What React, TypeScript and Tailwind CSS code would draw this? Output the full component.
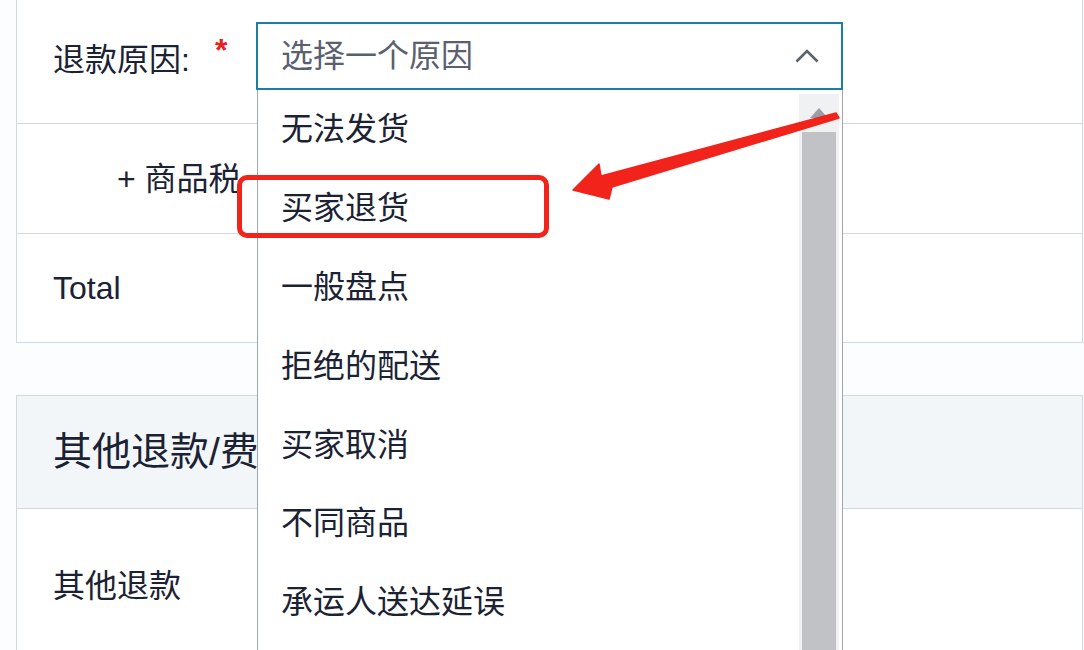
const reasons = [
  "无法发货",
  "买家退货",
  "一般盘点",
  "拒绝的配送",
  "买家取消",
  "不同商品",
  "承运人送达延误",
];

export default function App() {
  return (
    <div className="relative h-[650px] w-[1084px] overflow-hidden bg-[#fcfdfe] font-['Liberation_Sans','Noto_Sans_CJK_SC',sans-serif] text-[#1a2234]">
      <div className="ml-4 mr-px">
        {/* first card */}
        <div className="-mt-px border border-[#d3d9e1] bg-white">
          <div className="flex h-[124px] border-b border-[#d3d9e1] pl-[36px] pt-[22px]">
            <div className="flex w-[203px] items-start">
              <span className="mt-[19px] text-[32px] leading-[38px]">退款原因:</span>
              <span className="ml-[25px] mt-[12px] text-[32px] font-bold leading-none text-[#e8211d]">*</span>
            </div>
            <div className="flex h-[68px] w-[587px] items-center justify-between border-2 border-[#1b7ea3] bg-white pl-[23px] pr-[22px]">
              <span className="text-[32px] leading-[38px] text-[#596070]">选择一个原因</span>
              <svg width="24" height="14" viewBox="0 0 24 14" fill="none">
                <polyline points="1.5,12.5 12,2 22.5,12.5" stroke="#5a6272" strokeWidth="2.6" />
              </svg>
            </div>
          </div>
          <div className="flex h-[110px] items-center border-b border-[#d3d9e1] pl-[100px]">
            {/* clipped where the open list covers it */}
            <span className="w-[140px] overflow-hidden whitespace-nowrap text-[32px] leading-[38px]">+ 商品税</span>
          </div>
          <div className="flex h-[108px] items-center pl-[36px]">
            <span className="text-[32px] leading-[38px]">Total</span>
          </div>
        </div>

        {/* second card */}
        <div className="mt-[52px] border border-[#d3d9e1] bg-white">
          <div className="flex h-[113px] items-center border-b border-[#d3d9e1] bg-[#f3f6f9] pl-[36px]">
            <span className="w-[204px] overflow-hidden whitespace-nowrap text-[39px] leading-[46px]">其他退款/费用</span>
          </div>
          <div className="h-[200px] pl-[36px] pt-[58px]">
            <span className="text-[32px] leading-[38px]">其他退款</span>
          </div>
        </div>
      </div>

      {/* open dropdown list */}
      <div className="absolute left-[257px] top-[90px] z-10 flex h-[570px] w-[586px] border-x border-[#9ea6b2] bg-white">
        <ul className="flex-1">
          {reasons.map((r) => (
            <li key={r} className="flex h-[78.8px] items-center pl-[23px] text-[32px] leading-[38px]">
              {r}
            </li>
          ))}
        </ul>
        <div className="mr-[3px] mt-[4px] flex w-[40px] flex-col bg-[#f0f1f2]">
          <div className="flex h-[38px] items-center justify-center">
            <svg width="20" height="12" viewBox="0 0 20 12">
              <polygon points="10,1 19,11 1,11" fill="#9a9ea6" />
            </svg>
          </div>
          <div className="mx-[3px] flex-1 bg-[#c1c2c5]" />
        </div>
      </div>

      {/* annotation: red box */}
      <div className="pointer-events-none absolute left-[237px] top-[175px] z-20 h-[63px] w-[312px] rounded-[10px] border-[5px] border-[#f2231b]" />

      {/* annotation: red arrow */}
      <svg className="pointer-events-none absolute left-0 top-0 z-20" width="1084" height="650" viewBox="0 0 1084 650">
        <polygon
          points="836,113 839,118 612,187 609,199 573,190 599,164 601,176"
          fill="#f2231b"
          strokeLinejoin="round"
          stroke="#f2231b"
          strokeWidth="1.5"
        />
      </svg>
    </div>
  );
}
